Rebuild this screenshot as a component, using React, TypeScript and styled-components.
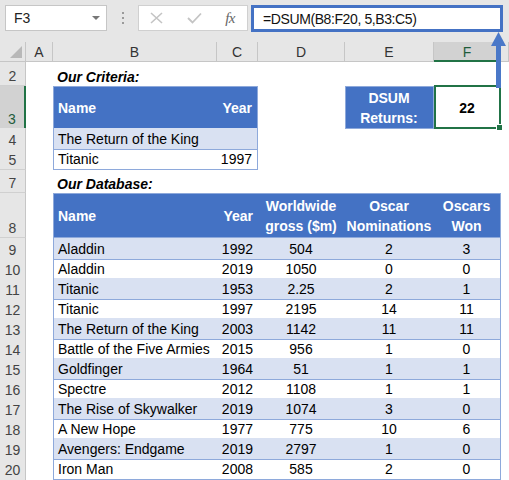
import React from "react";
import styled, { createGlobalStyle, css } from "styled-components";

const GlobalStyle = createGlobalStyle`
  html, body { margin: 0; padding: 0; background: #fff; }
  body { font-family: "Liberation Sans", Arial, sans-serif; font-size: 14px; }
`;

const COLS = "26px 27px 164px 41px 87px 89px 67px 1fr";
const BLUE = "#4472C4";
const BAND = "#D9E1F2";
const LINE = "#8EA9DB";
const GREEN = "#217346";

const Frame = styled.div`
  position: relative;
  width: 509px;
  height: 480px;
  overflow: hidden;
  background: #fff;
  color: #000;
`;

const Toolbar = styled.div`
  display: flex;
  align-items: flex-start;
  height: 42px;
  padding: 5px 0 0 5px;
  box-sizing: border-box;
  background: #e6e6e6;
`;

const NameBox = styled.div`
  display: flex;
  align-items: center;
  justify-content: space-between;
  width: 102px;
  height: 26px;
  padding: 0 6px 0 8px;
  box-sizing: border-box;
  background: #fff;
  border: 1px solid #c6c6c6;
  color: #222;
`;

const DropArrow = styled.span`
  width: 0;
  height: 0;
  border-left: 4px solid transparent;
  border-right: 4px solid transparent;
  border-top: 4px solid #777;
`;

const Dots = styled.div`
  display: flex;
  flex-direction: column;
  align-items: center;
  justify-content: center;
  gap: 3px;
  width: 31px;
  height: 26px;
  span {
    width: 2px;
    height: 2px;
    background: #9a9a9a;
  }
`;

const FxBox = styled.div`
  display: flex;
  align-items: center;
  justify-content: space-between;
  width: 110px;
  height: 26px;
  padding: 0 12px 0 11px;
  box-sizing: border-box;
  background: #fff;
  border: 1px solid #d0d0d0;
`;

const FxLabel = styled.span`
  font-family: "Liberation Serif", "Times New Roman", serif;
  font-style: italic;
  font-size: 15px;
  color: #666;
  letter-spacing: -0.5px;
`;

const FormulaInput = styled.div`
  display: flex;
  align-items: center;
  margin-left: 3px;
  width: 252px;
  height: 27px;
  padding-left: 9px;
  box-sizing: border-box;
  border: 3px solid ${BLUE};
  background: #fff;
  color: #111;
  letter-spacing: -0.4px;
`;

const Row = styled.div<{ $h: number }>`
  display: grid;
  grid-template-columns: ${COLS};
  height: ${(p) => p.$h}px;
  background: #fff;
`;

const Corner = styled.div`
  position: relative;
  background: #e6e6e6;
  border-right: 1px solid #c6c6c6;
  border-bottom: 1px solid #c6c6c6;
  &::after {
    content: "";
    position: absolute;
    right: 3px;
    bottom: 3px;
    width: 0;
    height: 0;
    border-left: 12px solid transparent;
    border-bottom: 12px solid #b8b8b8;
  }
`;

const ColHead = styled.div<{ $sel?: boolean }>`
  display: flex;
  align-items: center;
  justify-content: center;
  background: ${(p) => (p.$sel ? "#d2d2d2" : "#e6e6e6")};
  border-right: 1px solid #c6c6c6;
  border-bottom: ${(p) => (p.$sel ? `2px solid ${GREEN}` : "1px solid #c6c6c6")};
  color: ${(p) => (p.$sel ? "#1e5c3a" : "#333")};
  padding-top: 1px;
  box-sizing: border-box;
`;

const RowNum = styled.div<{ $sel?: boolean }>`
  display: flex;
  align-items: flex-end;
  justify-content: center;
  padding-bottom: 1px;
  box-sizing: border-box;
  background: ${(p) => (p.$sel ? "#d2d2d2" : "#e6e6e6")};
  border-right: ${(p) => (p.$sel ? `2px solid ${GREEN}` : "1px solid #c6c6c6")};
  border-bottom: 1px solid #d0d0d0;
  color: ${(p) => (p.$sel ? "#1e5c3a" : "#444")};
`;

type Kind = "head" | "band" | "plain" | "label";

const Cell = styled.div<{
  $col: number;
  $span?: number;
  $kind?: Kind;
  $align?: "left" | "right" | "center";
  $valign?: "center" | "end";
  $top?: boolean;
  $left?: boolean;
  $right?: boolean;
}>`
  grid-column: ${(p) => `${p.$col} / span ${p.$span ?? 1}`};
  display: flex;
  flex-direction: column;
  justify-content: ${(p) => (p.$valign === "end" ? "flex-end" : "center")};
  align-items: ${(p) =>
    p.$align === "right" ? "flex-end" : p.$align === "center" ? "center" : "flex-start"};
  text-align: ${(p) => p.$align ?? "left"};
  padding: 1px 5px 0 4px;
  box-sizing: border-box;
  line-height: 20px;
  white-space: nowrap;
  ${(p) =>
    p.$kind === "head" &&
    css`
      background: ${BLUE};
      color: #fff;
      font-weight: bold;
    `}
  ${(p) => p.$kind === "band" && css`background: ${BAND};`}
  ${(p) =>
    p.$kind === "label" &&
    css`
      font-weight: bold;
      font-style: italic;
      line-height: 16px;
      padding-bottom: 1px;
    `}
  ${(p) => p.$kind && p.$kind !== "label" && css`border-bottom: 1px solid ${LINE};`}
  ${(p) => p.$top && css`border-top: 1px solid ${LINE};`}
  ${(p) => p.$left && css`border-left: 1px solid ${LINE};`}
  ${(p) => p.$right && css`border-right: 1px solid ${LINE};`}
`;

const ResultLabel = styled(Cell)`
  background: ${BLUE};
  color: #fff;
  font-weight: bold;
  border: 1px solid ${LINE};
`;

const ResultCell = styled(Cell)`
  position: relative;
  border: 2px solid ${GREEN};
  font-weight: bold;
  margin-top: -1px;
`;

const FillHandle = styled.span`
  position: absolute;
  right: -4px;
  bottom: -4px;
  width: 5px;
  height: 5px;
  background: ${GREEN};
  border: 1px solid #fff;
`;

const Arrow = styled.svg`
  position: absolute;
  left: 489px;
  top: 31px;
`;

type Movie = [string, number, string, number, number];

const movies: Movie[] = [
  ["Aladdin", 1992, "504", 2, 3],
  ["Aladdin", 2019, "1050", 0, 0],
  ["Titanic", 1953, "2.25", 2, 1],
  ["Titanic", 1997, "2195", 14, 11],
  ["The Return of the King", 2003, "1142", 11, 11],
  ["Battle of the Five Armies", 2015, "956", 1, 0],
  ["Goldfinger", 1964, "51", 1, 1],
  ["Spectre", 2012, "1108", 1, 1],
  ["The Rise of Skywalker", 2019, "1074", 3, 0],
  ["A New Hope", 1977, "775", 10, 6],
  ["Avengers: Endgame", 2019, "2797", 1, 0],
  ["Iron Man", 2008, "585", 2, 0],
];

const letters = ["A", "B", "C", "D", "E", "F", ""];

export default function App() {
  return (
    <>
      <GlobalStyle />
      <Frame>
        <Toolbar>
          <NameBox>
            F3
            <DropArrow />
          </NameBox>
          <Dots>
            <span />
            <span />
            <span />
          </Dots>
          <FxBox>
            <svg width="13" height="12" viewBox="0 0 13 12">
              <path d="M1 1 L12 11 M12 1 L1 11" stroke="#c4c4c4" strokeWidth="1.6" fill="none" />
            </svg>
            <svg width="15" height="12" viewBox="0 0 15 12">
              <path d="M1 6 L5.5 10.5 L14 1.5" stroke="#c4c4c4" strokeWidth="1.8" fill="none" />
            </svg>
            <FxLabel>fx</FxLabel>
          </FxBox>
          <FormulaInput>=DSUM(B8:F20, 5,B3:C5)</FormulaInput>
        </Toolbar>

        <Row $h={20}>
          <Corner />
          {letters.map((l, i) => (
            <ColHead key={i} $sel={l === "F"}>
              {l}
            </ColHead>
          ))}
        </Row>

        <Row $h={24}>
          <RowNum>2</RowNum>
          <Cell $col={3} $kind="label" $valign="end">
            Our Criteria:
          </Cell>
        </Row>

        <Row $h={42}>
          <RowNum $sel>3</RowNum>
          <Cell $col={3} $kind="head" $top $left>
            Name
          </Cell>
          <Cell $col={4} $kind="head" $top $right $align="right">
            Year
          </Cell>
          <ResultLabel $col={6} $align="center">
            DSUM
            <br />
            Returns:
          </ResultLabel>
          <ResultCell $col={7} $align="center">
            22
            <FillHandle />
          </ResultCell>
        </Row>

        <Row $h={20}>
          <RowNum>4</RowNum>
          <Cell $col={3} $span={2} $kind="band" $left $right>
            The Return of the King
          </Cell>
        </Row>

        <Row $h={20}>
          <RowNum>5</RowNum>
          <Cell $col={3} $kind="plain" $left>
            Titanic
          </Cell>
          <Cell $col={4} $kind="plain" $right $align="right">
            1997
          </Cell>
        </Row>

        <Row $h={2}>
          <RowNum />
        </Row>

        <Row $h={23}>
          <RowNum>7</RowNum>
          <Cell $col={3} $kind="label" $valign="end">
            Our Database:
          </Cell>
        </Row>

        <Row $h={45}>
          <RowNum>8</RowNum>
          <Cell $col={3} $kind="head" $top $left>
            Name
          </Cell>
          <Cell $col={4} $kind="head" $top $align="right">
            Year
          </Cell>
          <Cell $col={5} $kind="head" $top $align="center">
            Worldwide
            <br />
            gross ($m)
          </Cell>
          <Cell $col={6} $kind="head" $top $align="center">
            Oscar
            <br />
            Nominations
          </Cell>
          <Cell $col={7} $kind="head" $top $right $align="center">
            Oscars
            <br />
            Won
          </Cell>
        </Row>

        {movies.map(([name, year, gross, noms, won], i) => {
          const kind: Kind = i % 2 === 0 ? "band" : "plain";
          return (
            <Row $h={20} key={i}>
              <RowNum>{i + 9}</RowNum>
              <Cell $col={3} $kind={kind} $left>
                {name}
              </Cell>
              <Cell $col={4} $kind={kind} $align="right">
                {year}
              </Cell>
              <Cell $col={5} $kind={kind} $align="center">
                {gross}
              </Cell>
              <Cell $col={6} $kind={kind} $align="center">
                {noms}
              </Cell>
              <Cell $col={7} $kind={kind} $right $align="center">
                {won}
              </Cell>
            </Row>
          );
        })}

        <Row $h={20}>
          <RowNum />
        </Row>

        <Arrow width="18" height="58" viewBox="0 0 18 58">
          <rect x="7" y="13" width="5" height="44" fill="#4a78c8" />
          <path d="M9.5 1 L2 15 L17 15 Z" fill="#4a78c8" />
        </Arrow>
      </Frame>
    </>
  );
}
